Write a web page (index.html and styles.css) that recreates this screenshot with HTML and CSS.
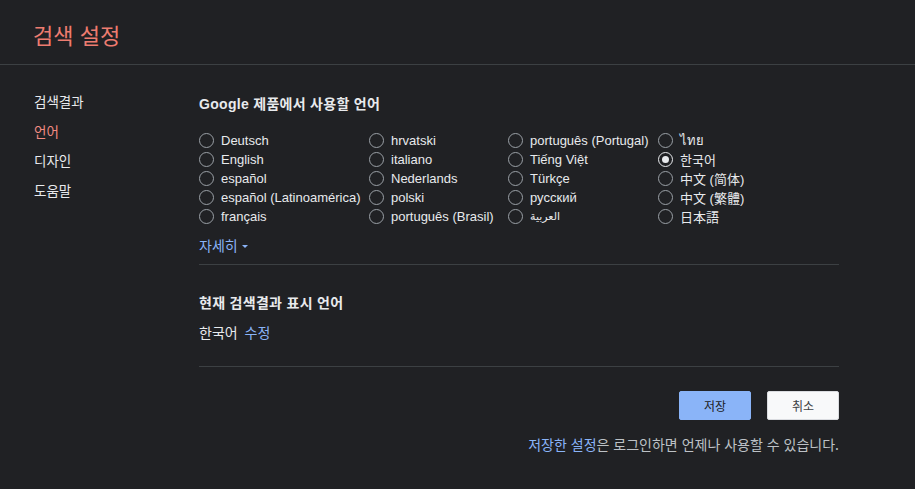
FILE: index.html
```html
<!DOCTYPE html>
<html lang="ko">
<head>
<meta charset="utf-8">
<title>검색 설정</title>
<link rel="stylesheet" href="styles.css">
</head>
<body>
<header class="top">
  <h1 class="title">검색 설정</h1>
</header>
<div class="main">
  <nav class="nav">
    <a class="nav-item">검색결과</a>
    <a class="nav-item active">언어</a>
    <a class="nav-item">디자인</a>
    <a class="nav-item">도움말</a>
  </nav>
  <section class="content">
    <h2 class="heading">Google 제품에서 사용할 언어</h2>
    <div class="langs">
      <div class="col c1">
        <div class="opt"><span class="radio"></span>Deutsch</div>
        <div class="opt"><span class="radio"></span>English</div>
        <div class="opt"><span class="radio"></span>español</div>
        <div class="opt"><span class="radio"></span>español (Latinoamérica)</div>
        <div class="opt"><span class="radio"></span>français</div>
      </div>
      <div class="col c2">
        <div class="opt"><span class="radio"></span>hrvatski</div>
        <div class="opt"><span class="radio"></span>italiano</div>
        <div class="opt"><span class="radio"></span>Nederlands</div>
        <div class="opt"><span class="radio"></span>polski</div>
        <div class="opt"><span class="radio"></span>português (Brasil)</div>
      </div>
      <div class="col c3">
        <div class="opt"><span class="radio"></span>português (Portugal)</div>
        <div class="opt"><span class="radio"></span>Tiếng Việt</div>
        <div class="opt"><span class="radio"></span>Türkçe</div>
        <div class="opt"><span class="radio"></span>русский</div>
        <div class="opt"><span class="radio"></span><span class="ar">العربية</span></div>
      </div>
      <div class="col c4">
        <div class="opt"><span class="radio"></span>ไทย</div>
        <div class="opt"><span class="radio checked"></span>한국어</div>
        <div class="opt"><span class="radio"></span>中文 (简体)</div>
        <div class="opt"><span class="radio"></span>中文 (繁體)</div>
        <div class="opt"><span class="radio"></span>日本語</div>
      </div>
    </div>
    <a class="more">자세히 <span class="caret"></span></a>
    <div class="divider d1"></div>
    <h2 class="heading h2">현재 검색결과 표시 언어</h2>
    <div class="current">한국어 <a class="link">수정</a></div>
    <div class="divider d2"></div>
    <div class="actions">
      <button class="btn save">저장</button>
      <button class="btn cancel">취소</button>
    </div>
    <p class="note"><a class="link">저장한 설정</a>은 로그인하면 언제나 사용할 수 있습니다.</p>
  </section>
</div>
</body>
</html>
```
FILE: styles.css
```css
html, body {
  margin: 0;
  padding: 0;
  background: #202124;
  color: #e8eaed;
  font-family: "Liberation Sans", Arial, "Noto Sans CJK KR", sans-serif;
  font-size: 13px;
}
.top {
  height: 64px;
  border-bottom: 1px solid #3c4043;
  display: flex;
  align-items: center;
  padding-left: 33px;
}
.title {
  margin: 0;
  font-size: 22px;
  font-weight: normal;
  color: #ee7c70;
  font-family: "Noto Sans CJK KR", sans-serif;
  line-height: 26px;
  padding-top: 3px;
}
.main {
  display: flex;
}
.nav {
  width: 165px;
  padding: 21px 0 0 34px;
  display: flex;
  flex-direction: column;
}
.nav-item {
  line-height: 30px;
  height: 29.7px;
  color: #e8eaed;
  font-family: "Noto Sans CJK KR", sans-serif;
  font-size: 13.5px;
}
.nav-item.active {
  color: #f28b82;
}
.content {
  width: 640px;
  padding-top: 29px;
}
.heading {
  margin: 0;
  font-size: 14px;
  letter-spacing: 0.3px;
  font-weight: bold;
  line-height: 20px;
  color: #e8eaed;
}
.langs {
  display: flex;
  margin-top: 17px;
}
.col {
  display: flex;
  flex-direction: column;
}
.c1 { width: 170px; }
.c2 { width: 139px; }
.c3 { width: 150px; }
.opt {
  height: 19px;
  display: flex;
  align-items: center;
  white-space: nowrap;
  color: #e8eaed;
}
.radio {
  width: 13px;
  height: 13px;
  border: 1px solid #9aa0a6;
  border-radius: 50%;
  margin-right: 7px;
  flex: none;
  box-sizing: content-box;
  position: relative;
}
.radio.checked {
  border-color: #e8eaed;
}
.radio.checked::after {
  content: "";
  position: absolute;
  left: 3px;
  top: 3px;
  width: 7px;
  height: 7px;
  border-radius: 50%;
  background: #e8eaed;
}
.ar {
  font-size: 11px;
  font-family: "DejaVu Sans", sans-serif;
}
.more {
  display: flex;
  align-items: center;
  margin-top: 9px;
  line-height: 20px;
  color: #8ab4f8;
  font-family: "Noto Sans CJK KR", sans-serif;
  font-size: 14px;
}
.caret {
  display: inline-block;
  margin-left: 4px;
  margin-top: 2px;
  border-left: 3px solid transparent;
  border-right: 3px solid transparent;
  border-top: 3px solid #8ab4f8;
}
.divider {
  border-top: 1px solid #3c4043;
}
.d1 { margin-top: 9px; }
.h2 { margin-top: 28px; }
.current {
  margin-top: 9px;
  line-height: 20px;
  font-family: "Noto Sans CJK KR", sans-serif;
  font-size: 14px;
  color: #e8eaed;
}
.link {
  color: #8ab4f8;
  margin-left: 3px;
}
.note .link { margin-left: 0; }
.d2 { margin-top: 24px; }
.actions {
  display: flex;
  justify-content: flex-end;
  gap: 16px;
  margin-top: 24px;
}
.btn {
  width: 72px;
  height: 29px;
  border-radius: 2px;
  font-family: "Noto Sans CJK KR", sans-serif;
  font-size: 12px;
  padding: 0;
  cursor: pointer;
}
.save {
  background: #8ab4f8;
  border: 1px solid #8ab4f8;
  color: #202124;
}
.cancel {
  background: #f8f9fa;
  border: 1px solid #dadce0;
  color: #3c4043;
}
.note {
  margin: 14px 0 0;
  text-align: right;
  line-height: 20px;
  color: #bdc1c6;
  font-family: "Noto Sans CJK KR", sans-serif;
  font-size: 14px;
}
```
